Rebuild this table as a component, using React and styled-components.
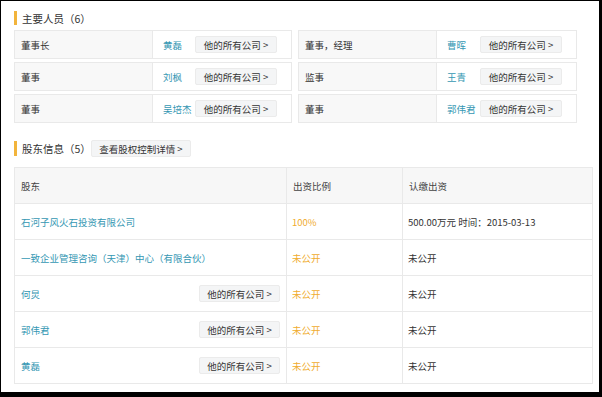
import React from 'react';
import styled, { createGlobalStyle } from 'styled-components';

const Global = createGlobalStyle`
  body {
    margin: 0;
    background: #fff;
    font-family: "Noto Sans CJK SC", "Noto Sans", sans-serif;
    color: #333;
  }
`;

const Frame = styled.div`
  width: 602px;
  height: 397px;
  box-sizing: border-box;
  border-style: solid;
  border-color: #000;
  border-width: 1px 3px 5px 1px;
  background: #fff;
  padding: 10px 0 0 13px;
  overflow: hidden;
`;

const TitleRow = styled.div`
  display: flex;
  align-items: center;
  height: ${(p) => p.$h}px;
  margin-top: ${(p) => p.$top || 0}px;
  margin-bottom: ${(p) => p.$bottom}px;
`;

const Bar = styled.span`
  width: 3px;
  height: ${(p) => p.$h}px;
  background: #f2b43c;
  margin-right: 5px;
`;

const TitleText = styled.span`
  font-size: 10.5px;
  color: #333;
`;

const Button = styled.span`
  display: inline-flex;
  align-items: center;
  justify-content: center;
  box-sizing: border-box;
  height: 17px;
  width: ${(p) => p.$w || 82}px;
  background: #f4f5f6;
  border: 1px solid #ebebeb;
  border-radius: 2px;
  font-size: 9.5px;
  color: #333;
  white-space: nowrap;
  flex-shrink: 0;
`;

const PeopleGrid = styled.div`
  display: grid;
  grid-template-columns: 278px 279px;
  column-gap: 6px;
  row-gap: 3px;
`;

const PersonCard = styled.div`
  display: flex;
  height: 29px;
  box-sizing: border-box;
  border: 1px solid #e9e9e9;
`;

const Role = styled.div`
  width: 138px;
  box-sizing: border-box;
  background: #f8f8f8;
  border-right: 1px solid #e9e9e9;
  padding-left: 6px;
  display: flex;
  align-items: center;
  font-size: 9.5px;
  color: #333;
`;

const PersonCell = styled.div`
  flex: 1;
  display: flex;
  align-items: center;
  padding: 0 14px 0 10px;
`;

const Name = styled.span`
  flex: 1;
  font-size: 9.5px;
  color: #3597b3;
  white-space: nowrap;
`;

const Table = styled.table`
  width: 578px;
  border-collapse: collapse;
  table-layout: fixed;
  font-size: 9.5px;
`;

const Th = styled.th`
  height: 35px;
  padding: 0 6px;
  text-align: left;
  font-weight: normal;
  color: #444;
  background: #f7f7f7;
  border: 1px solid #e9e9e9;
`;

const Td = styled.td`
  height: 35px;
  padding: 0 6px 0 ${(p) => (p.$first ? 6 : 5)}px;
  border: 1px solid #e9e9e9;
  color: ${(p) => (p.$tone === 'link' ? '#3597b3' : p.$tone === 'warn' ? '#f0ac2e' : '#333')};
  white-space: nowrap;
`;

const HolderCell = styled.div`
  display: flex;
  align-items: center;
  justify-content: space-between;
`;

const people = [
  ['董事长', '黄磊'],
  ['董事，经理', '曹晖'],
  ['董事', '刘枫'],
  ['监事', '王青'],
  ['董事', '吴培杰'],
  ['董事', '郭伟君'],
];

const holders = [
  { name: '石河子风火石投资有限公司', ratio: '100%', amount: '500.00万元 时间：2015-03-13' },
  { name: '一致企业管理咨询（天津）中心（有限合伙）', ratio: '未公开', amount: '未公开' },
  { name: '何炅', ratio: '未公开', amount: '未公开', person: true },
  { name: '郭伟君', ratio: '未公开', amount: '未公开', person: true },
  { name: '黄磊', ratio: '未公开', amount: '未公开', person: true },
];

export default function App() {
  return (
    <Frame>
      <Global />
      <TitleRow $h={14} $bottom={5}>
        <Bar $h={14} />
        <TitleText>主要人员（6）</TitleText>
      </TitleRow>
      <PeopleGrid>
        {people.map(([role, name], i) => (
          <PersonCard key={i}>
            <Role>{role}</Role>
            <PersonCell>
              <Name>{name}</Name>
              <Button>他的所有公司 &gt;</Button>
            </PersonCell>
          </PersonCard>
        ))}
      </PeopleGrid>

      <TitleRow $h={17} $top={17} $bottom={10}>
        <Bar $h={15} />
        <TitleText>股东信息（5）</TitleText>
        <Button $w={100}>查看股权控制详情 &gt;</Button>
      </TitleRow>
      <Table>
        <colgroup>
          <col style={{ width: 272 }} />
          <col style={{ width: 116 }} />
          <col style={{ width: 190 }} />
        </colgroup>
        <thead>
          <tr>
            <Th>股东</Th>
            <Th>出资比例</Th>
            <Th>认缴出资</Th>
          </tr>
        </thead>
        <tbody>
          {holders.map((h, i) => (
            <tr key={i}>
              <Td $first $tone="link">
                <HolderCell>
                  <span>{h.name}</span>
                  {h.person && <Button $w={81}>他的所有公司 &gt;</Button>}
                </HolderCell>
              </Td>
              <Td $tone="warn">{h.ratio}</Td>
              <Td>{h.amount}</Td>
            </tr>
          ))}
        </tbody>
      </Table>
    </Frame>
  );
}
